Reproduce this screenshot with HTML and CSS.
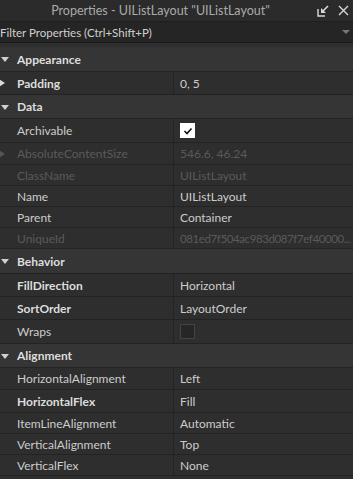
FILE: index.html
```html
<!DOCTYPE html>
<html lang="en">
<head>
    <meta charset="UTF-8">
    <meta name="viewport" content="width=device-width, initial-scale=1.0">
    <title>Properties</title>
    <link rel="stylesheet" href="styles.css">
</head>
<body>

<div class="panel">
    <div class="titlebar">
        <span class="title">Properties - UIListLayout "UIListLayout"</span>
        <div class="title-icons">
            <svg width="12" height="12" viewBox="0 0 12 12">
                <path d="M1 4 V11 H8" fill="none" stroke="#d8d8d8" stroke-width="1.4"/>
                <path d="M11 1 L5 7" stroke="#d8d8d8" stroke-width="1.6"/>
                <path d="M4 3 V8 H9 Z" fill="#d8d8d8"/>
            </svg>
            <svg width="11" height="11" viewBox="0 0 11 11">
                <path d="M1 1 L10 10 M10 1 L1 10" stroke="#d8d8d8" stroke-width="1.4"/>
            </svg>
        </div>
    </div>

    <div class="filter">
        <span>Filter Properties (Ctrl+Shift+P)</span>
        <span class="drop"></span>
    </div>

    <div class="props">
        <div class="group h25"><span class="tri-down"></span>Appearance</div>
        <div class="row h23 bold"><span class="tri-right"></span><div class="name">Padding</div><div class="value">0, 5</div></div>

        <div class="group h24"><span class="tri-down"></span>Data</div>
        <div class="row h24"><div class="name">Archivable</div><div class="value"><span class="check on">
            <svg width="10" height="8" viewBox="0 0 10 8"><path d="M1.5 4 L4 6.5 L8.5 1.5" fill="none" stroke="#111" stroke-width="1.6"/></svg>
        </span></div></div>
        <div class="row h22 off"><span class="tri-right dim"></span><div class="name">AbsoluteContentSize</div><div class="value">546.6, 46.24</div></div>
        <div class="row h21 off"><div class="name">ClassName</div><div class="value">UIListLayout</div></div>
        <div class="row h21"><div class="name">Name</div><div class="value">UIListLayout</div></div>
        <div class="row h21"><div class="name">Parent</div><div class="value">Container</div></div>
        <div class="row h21 off"><div class="name">UniqueId</div><div class="value long">081ed7f504ac983d087f7ef40000...</div></div>

        <div class="group h25"><span class="tri-down"></span>Behavior</div>
        <div class="row h23 bold"><div class="name">FillDirection</div><div class="value">Horizontal</div></div>
        <div class="row h23 bold"><div class="name">SortOrder</div><div class="value">LayoutOrder</div></div>
        <div class="row h24"><div class="name">Wraps</div><div class="value"><span class="check"></span></div></div>

        <div class="group h24"><span class="tri-down"></span>Alignment</div>
        <div class="row h22"><div class="name">HorizontalAlignment</div><div class="value">Left</div></div>
        <div class="row h23 bold"><div class="name">HorizontalFlex</div><div class="value">Fill</div></div>
        <div class="row h21"><div class="name">ItemLineAlignment</div><div class="value">Automatic</div></div>
        <div class="row h21"><div class="name">VerticalAlignment</div><div class="value">Top</div></div>
        <div class="row h21"><div class="name">VerticalFlex</div><div class="value">None</div></div>
    </div>
</div>

</body>
</html>
```

FILE: styles.css
```css
body {
    margin: 0;
    background: #2e2e2e;
    font-family: Lato, "Open Sans", sans-serif;
    font-size: 12px;
    color: #cccccc;
}
.panel {
    width: 353px;
    height: 479px;
    overflow: hidden;
    background: #2e2e2e;
}
.titlebar {
    height: 22px;
    display: flex;
    align-items: center;
    background: #2b2b2b;
    border-bottom: 1px solid #1e1e1e;
    box-sizing: border-box;
}
.title {
    flex: 1;
    text-align: center;
    padding-left: 4px;
    color: #aaaaaa;
    font-size: 12.5px;
}
.title-icons {
    display: flex;
    align-items: center;
    gap: 9px;
    padding-right: 4px;
}
.filter {
    height: 20px;
    display: flex;
    align-items: center;
    justify-content: space-between;
    background: #252525;
    border-bottom: 1px solid #1a1a1a;
    color: #d0d0d0;
    font-size: 11.5px;
}
.drop {
    width: 0;
    height: 0;
    margin-right: 3px;
    border-left: 4px solid transparent;
    border-right: 4px solid transparent;
    border-top: 4px solid #777;
}
.props {
    margin-top: 4px;
}
.group, .row {
    box-sizing: border-box;
    border-bottom: 1px solid #232323;
    display: flex;
    align-items: center;
    position: relative;
}
.h21 { height: 21px; }
.h22 { height: 22px; }
.h23 { height: 23px; }
.h24 { height: 24px; }
.h25 { height: 25px; }
.group {
    background: #353535;
    padding-left: 17px;
    font-weight: bold;
    color: #dddddd;
}
.row {
    background: #2e2e2e;
}
.name {
    width: 174px;
    height: 100%;
    box-sizing: border-box;
    padding-left: 17px;
    border-right: 1px solid #232323;
    display: flex;
    align-items: center;
    white-space: nowrap;
}
.value {
    flex: 1;
    min-width: 0;
    padding-left: 6px;
    white-space: nowrap;
    overflow: hidden;
}
.value.long {
    font-size: 11.5px;
    letter-spacing: -0.4px;
}
.bold .name {
    font-weight: bold;
    color: #dddddd;
}
.off .name, .off .value {
    color: #5a5a5a;
}
.tri-down {
    position: absolute;
    left: 1px;
    top: 50%;
    margin-top: -2px;
    border-left: 4px solid transparent;
    border-right: 4px solid transparent;
    border-top: 5px solid #d0d0d0;
}
.tri-right {
    position: absolute;
    left: -1px;
    top: 50%;
    margin-top: -4px;
    border-top: 4px solid transparent;
    border-bottom: 4px solid transparent;
    border-left: 6px solid #d8d8d8;
}
.tri-right.dim {
    border-left-color: #555;
}
.check {
    width: 15px;
    height: 15px;
    box-sizing: border-box;
    border: 1px solid #444;
    background: #262626;
    display: flex;
    align-items: center;
    justify-content: center;
}
.check.on {
    background: #ffffff;
    border-color: #ffffff;
}
```
